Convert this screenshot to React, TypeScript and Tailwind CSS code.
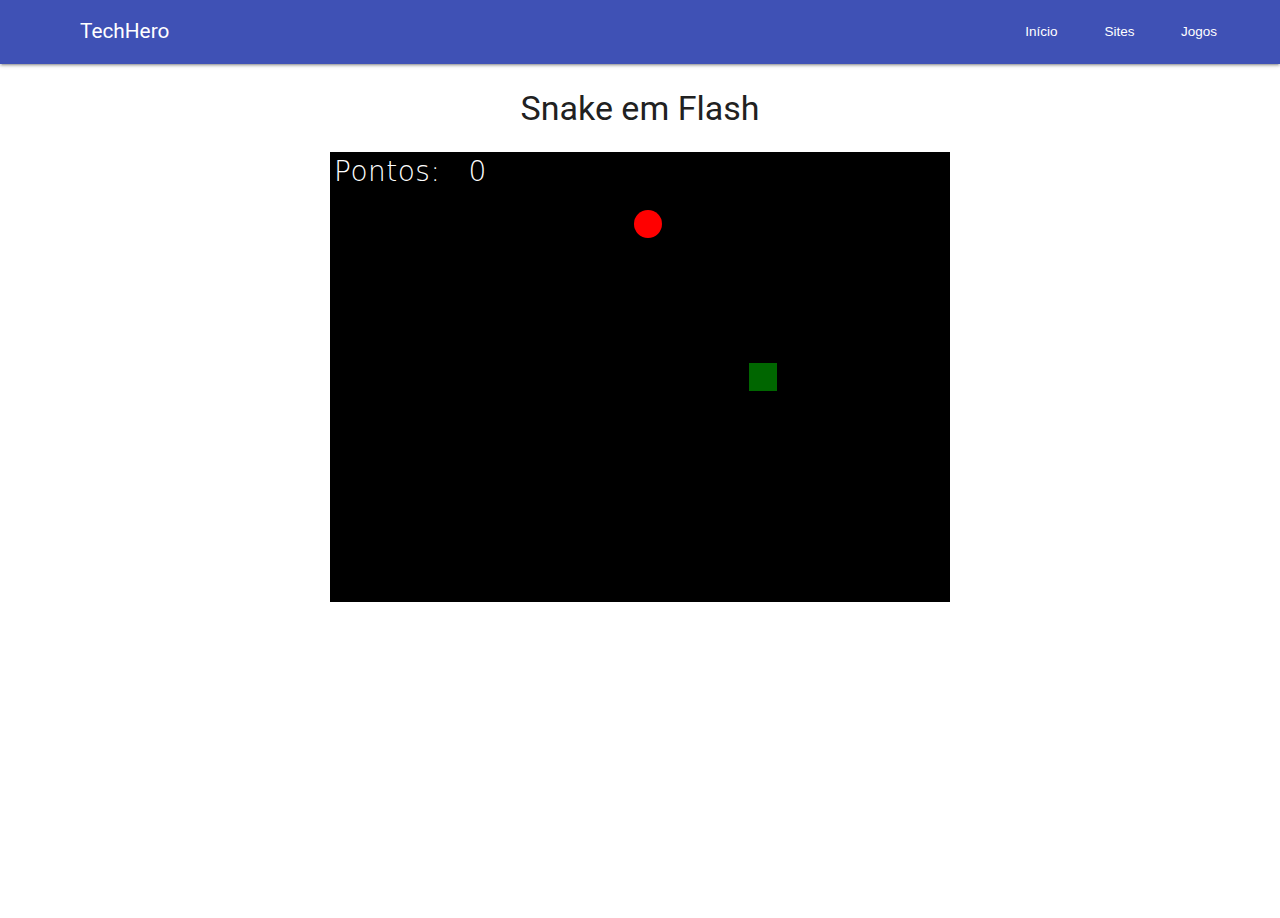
export default function App() {
  return (
    <div className="min-h-[918px] bg-white" style={{ fontFamily: "Roboto, 'Noto Sans', sans-serif" }}>
      <nav className="h-16 bg-[#3f51b5] shadow-[0_2px_2px_0_rgba(0,0,0,0.14),0_3px_1px_-2px_rgba(0,0,0,0.12),0_1px_5px_0_rgba(0,0,0,0.2)]">
        <div className="mx-auto flex h-16 w-[1120px] items-center justify-between">
          <span className="text-[20.8px] text-white" style={{ fontFamily: "Roboto, sans-serif" }}>TechHero</span>
          <ul className="mr-[-40px] flex h-16 items-center text-[13.5px] text-white" style={{ fontFamily: "'Liberation Sans', Arial, sans-serif" }}>
            <li className="px-[23.5px] leading-[64px]">Início</li>
            <li className="px-[23.5px] leading-[64px]">Sites</li>
            <li className="px-[23px] leading-[64px]">Jogos</li>
          </ul>
        </div>
      </nav>
      <h4 className="mt-[22px] text-center text-[34px] font-normal leading-[44px] text-[#212121]">Snake em Flash</h4>
      <div className="mt-[22px] flex justify-center">
        <div className="relative h-[450px] w-[620px] bg-black">
          <div
            className="absolute left-[4px] top-[2px] flex text-[28px] font-extralight leading-[36px] tracking-[0.5px] text-white"
            style={{ fontFamily: "'DejaVu Sans', sans-serif" }}
          >
            <span>Pontos:</span>
            <span className="ml-[28px]">0</span>
          </div>
          <div className="absolute left-[304px] top-[58px] h-[28px] w-[28px] rounded-full bg-[#ff0000]" />
          <div className="absolute left-[419px] top-[211px] h-[28px] w-[28px] bg-[#006600]" />
        </div>
      </div>
    </div>
  );
}
